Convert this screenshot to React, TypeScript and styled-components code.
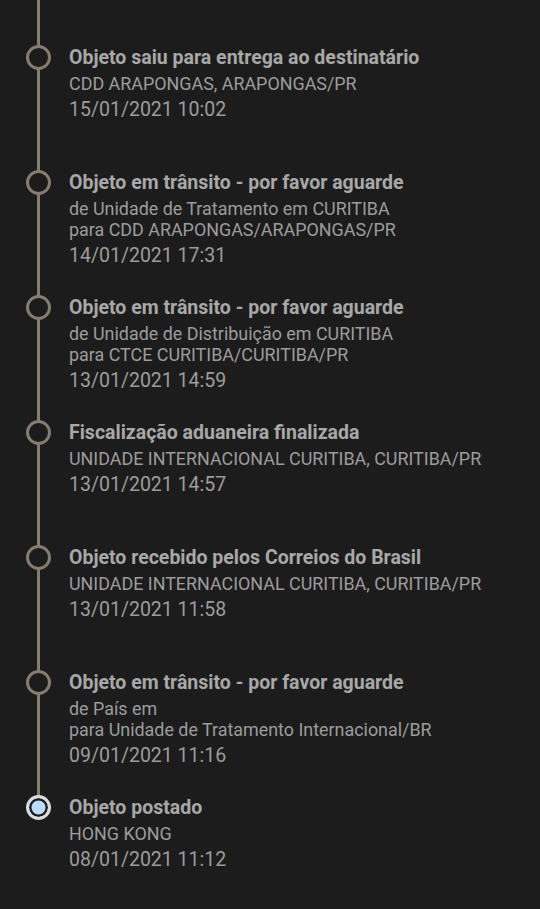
import React from 'react';
import styled, { createGlobalStyle } from 'styled-components';

const GlobalStyle = createGlobalStyle`
    html, body {
        margin: 0;
        padding: 0;
        background: #1c1c1c;
    }
    body {
        font-family: Roboto, "Noto Sans", sans-serif;
        -webkit-font-smoothing: antialiased;
    }
`;

const colors = {
    background: '#1c1c1c',
    rail: '#857d70',
    title: '#a8a8a8',
    text: '#9c9c9c',
    done: '#bcdcff',
    doneRing: '#dcdcdc',
};

interface TrackEvent {
    title: string;
    lines: string[];
    date: string;
}

const events: TrackEvent[] = [
    { title: 'Objeto saiu para entrega ao destinatário', lines: ['CDD ARAPONGAS, ARAPONGAS/PR'], date: '15/01/2021 10:02' },
    { title: 'Objeto em trânsito - por favor aguarde', lines: ['de Unidade de Tratamento em CURITIBA', 'para CDD ARAPONGAS/ARAPONGAS/PR'], date: '14/01/2021 17:31' },
    { title: 'Objeto em trânsito - por favor aguarde', lines: ['de Unidade de Distribuição em CURITIBA', 'para CTCE CURITIBA/CURITIBA/PR'], date: '13/01/2021 14:59' },
    { title: 'Fiscalização aduaneira finalizada', lines: ['UNIDADE INTERNACIONAL CURITIBA, CURITIBA/PR'], date: '13/01/2021 14:57' },
    { title: 'Objeto recebido pelos Correios do Brasil', lines: ['UNIDADE INTERNACIONAL CURITIBA, CURITIBA/PR'], date: '13/01/2021 11:58' },
    { title: 'Objeto em trânsito - por favor aguarde', lines: ['de País em', 'para Unidade de Tratamento Internacional/BR'], date: '09/01/2021 11:16' },
    { title: 'Objeto postado', lines: ['HONG KONG'], date: '08/01/2021 11:12' },
];

const Timeline = styled.div`
    display: flex;
    flex-direction: column;
    background: ${colors.background};
    min-height: 909px;
`;

const Item = styled.div`
    display: grid;
    grid-template-columns: 69px 1fr;
    height: 125px;
`;

const Rail = styled.div<{ last: boolean }>`
    position: relative;

    &::before {
        content: '';
        position: absolute;
        left: 36.5px;
        top: 0;
        width: 3px;
        height: ${(p) => (p.last ? '57px' : '100%')};
        background: ${colors.rail};
    }
`;

const Dot = styled.span<{ done: boolean }>`
    position: absolute;
    left: 25.5px;
    top: 44.5px;
    width: 25px;
    height: 25px;
    box-sizing: border-box;
    border-radius: 50%;
    border: 3px solid ${(p) => (p.done ? colors.doneRing : colors.rail)};
    background: ${(p) => (p.done ? colors.done : colors.background)};
    box-shadow: ${(p) => (p.done ? `inset 0 0 0 2.5px ${colors.background}` : 'none')};
`;

const Content = styled.div`
    display: flex;
    flex-direction: column;
    gap: 3px;
    padding-top: 46px;
`;

const Title = styled.div`
    font-size: 19.5px;
    font-weight: 700;
    line-height: 24px;
    color: ${colors.title};
    white-space: nowrap;
`;

const Place = styled.div`
    font-size: 17.9px;
    line-height: 21px;
    color: ${colors.text};
    white-space: nowrap;
`;

const Date = styled.div`
    margin-top: 1px;
    font-size: 19.5px;
    line-height: 24px;
    color: ${colors.text};
    white-space: nowrap;
`;

export default function App() {
    return (
        <>
            <GlobalStyle />
            <Timeline>
                {events.map((e, i) => {
                    const last = i === events.length - 1;
                    return (
                        <Item key={i}>
                            <Rail last={last}>
                                <Dot done={last} />
                            </Rail>
                            <Content>
                                <Title>{e.title}</Title>
                                <div>
                                    {e.lines.map((l, j) => (
                                        <Place key={j}>{l}</Place>
                                    ))}
                                </div>
                                <Date>{e.date}</Date>
                            </Content>
                        </Item>
                    );
                })}
            </Timeline>
        </>
    );
}
